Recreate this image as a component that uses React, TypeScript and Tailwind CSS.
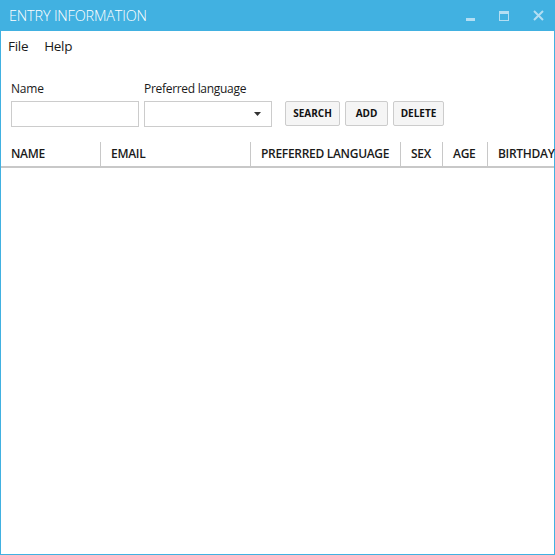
const columns = [
  { label: "NAME", width: "w-[100px]" },
  { label: "EMAIL", width: "w-[150px]" },
  { label: "PREFERRED LANGUAGE", width: "w-[150px]" },
  { label: "SEX", width: "w-[42px]" },
  { label: "AGE", width: "w-[45px]" },
  { label: "BIRTHDAY", width: "w-[80px]" },
];

const buttons = [
  { label: "SEARCH", width: "w-[55px]" },
  { label: "ADD", width: "w-[43px]" },
  { label: "DELETE", width: "w-[51px]" },
];

export default function App() {
  return (
    <div className="flex h-[555px] w-[555px] flex-col overflow-hidden bg-white font-['Open_Sans',sans-serif] text-[#1a1a1a]">
      {/* title bar */}
      <div className="flex h-[31px] shrink-0 items-center bg-[#41b1e1] pl-[9px] text-white">
        <span className="flex-1 text-[14.5px] font-light tracking-[-0.2px]">ENTRY INFORMATION</span>
        <div className="flex h-full items-center">
          <div className="flex h-full w-[34px] items-center justify-center">
            <div className="mt-[8px] h-[3px] w-[9px] bg-[#b3def3]" />
          </div>
          <div className="flex h-full w-[34px] items-center justify-center">
            <div className="h-[10px] w-[10px] border border-t-[3px] border-[#b3def3]" />
          </div>
          <div className="flex h-full w-[34px] items-center justify-center">
            <svg width="11" height="11" viewBox="0 0 11 11">
              <path d="M1 1 L10 10 M10 1 L1 10" stroke="#b3def3" strokeWidth="2" />
            </svg>
          </div>
        </div>
      </div>

      <div className="flex flex-1 flex-col border-x border-b border-[#41b1e1]">
        {/* menu */}
        <div className="flex h-[30px] items-center gap-[16px] pl-[7px] text-[13.5px] tracking-[-0.3px]">
          <span>File</span>
          <span>Help</span>
        </div>

        {/* search form */}
        <div className="flex items-end gap-[5px] pt-[19px] pl-[10px]">
          <div className="flex flex-col gap-[3px]">
            <label className="text-[12px] tracking-[-0.2px]">Name</label>
            <div className="h-[26px] w-[128px] border border-[#cccccc] bg-white" />
          </div>
          <div className="flex flex-col gap-[3px]">
            <label className="text-[12px] tracking-[-0.3px]">Preferred language</label>
            <div className="flex h-[26px] w-[128px] items-center justify-end border border-[#cccccc] bg-white pr-[10px]">
              <svg width="7" height="4" viewBox="0 0 7 4">
                <path d="M0 0 L7 0 L3.5 4 Z" fill="#333" />
              </svg>
            </div>
          </div>
          <div className="mb-[1px] ml-[8px] flex gap-[5px]">
            {buttons.map((b) => (
              <button
                key={b.label}
                className={`${b.width} h-[25px] rounded-[2px] border border-[#cccccc] bg-[#f5f5f5] text-[10px] font-bold text-[#111]`}
              >
                {b.label}
              </button>
            ))}
          </div>
        </div>

        {/* grid header */}
        <div className="mt-[15px] flex h-[26px] border-b-2 border-[#c8c8c8]">
          {columns.map((c, i) => (
            <div
              key={c.label}
              className={`${c.width} flex shrink-0 items-center pl-[10px] text-[12px] font-semibold tracking-[-0.3px] ${
                i < columns.length - 1 ? "border-r border-[#c8c8c8]" : ""
              }`}
            >
              {c.label}
            </div>
          ))}
        </div>
        <div className="flex-1" />
      </div>
    </div>
  );
}
